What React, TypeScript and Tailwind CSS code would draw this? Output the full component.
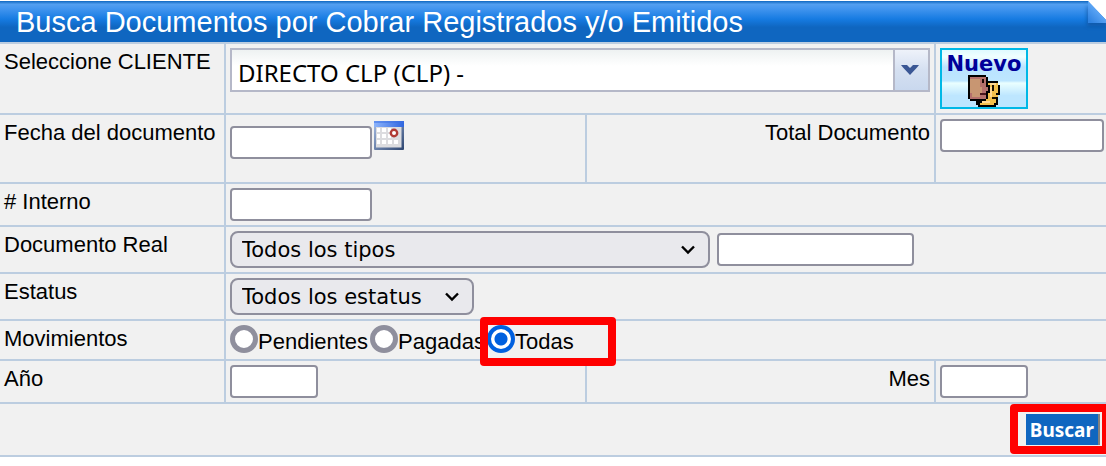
import React, { useState } from "react";

const label = "px-1 pt-1 text-[22px] leading-7";
const line = "border-b-2 border-[#bccde0]";
const side = "border-r-2 border-[#bccde0]";
const row = `grid grid-cols-[226px_361px_minmax(0,1fr)_170px] ${line}`;
const box = "h-[33px] rounded border-2 border-[#8f8f9d] bg-white px-1 text-[20px]";
const drop =
  "h-[37px] w-full appearance-none rounded-lg border-2 border-[#8f8f9d] bg-[#e9e9ed] pl-2.5 pr-8 font-['DejaVu_Sans',sans-serif] text-[21px] leading-[32px]";

function Drop({ id, text, className, name }: { id: string; text: string; className: string; name?: string }) {
  return (
    <div className={`relative ${className}`}>
      <select id={id} aria-label={name} className={drop}>
        <option>{text}</option>
      </select>
      <svg className="pointer-events-none absolute right-3.5 top-3.5 h-2.5 w-4" viewBox="0 0 16 10" fill="none" stroke="#000" strokeWidth="2.4">
        <path d="M2 1.5 8 7.5 14 1.5" />
      </svg>
    </div>
  );
}

function Calendar() {
  return (
    <svg className="h-[29px] w-[30px]" viewBox="0 0 30 29">
      <defs>
        <linearGradient id="calTop" x1="0" x2="1">
          <stop offset="0" stopColor="#8db4fb" />
          <stop offset="1" stopColor="#2f66e0" />
        </linearGradient>
        <linearGradient id="calEdge" x1="0" x2="1" y1="0" y2="1">
          <stop offset="0" stopColor="#a9bfe6" />
          <stop offset="1" stopColor="#2d456f" />
        </linearGradient>
      </defs>
      <rect width="30" height="29" rx="1" fill="url(#calEdge)" />
      <rect x="2" y="6" width="25.5" height="20.5" fill="#dcdcdf" />
      <path d="M3 7h3v4H3zM8 7h4v4H8zM14 7h3v4h-3zM3 13h3v4H3zM8 13h4v4H8zM14 13h3v4h-3zM3 19h3v4H3zM8 19h4v4H8zM14 19h4v4h-4zM20 19h4v4h-4z" fill="#fff" />
      <rect width="30" height="6" fill="url(#calTop)" />
      <rect width="30" height="2" fill="#3b6fe4" opacity=".5" />
      <circle cx="20" cy="12" r="3.2" fill="#fff" stroke="#b03a34" strokeWidth="2.4" />
    </svg>
  );
}

function People() {
  return (
    <svg className="h-8 w-8" viewBox="0 0 16 16" shapeRendering="crispEdges">
      <path d="M9 3h6v2h1v5h-1v5h-1v1H5v-1H4v-2h5z" fill="#000" />
      <path d="M10 4h5v5h-1v1h1v1h-1v3h-1v1H6v-1h3v-2h1z" fill="#f3c04c" />
      <path d="M11 4h3v1h-3zM11 6h1v5h-1zM7 13h4v1H7z" fill="#ffd994" />
      <path d="M12 5h1v3h-1zM12 11h2v1h-2z" fill="#1a1000" />
      <path d="M0 0h9v1h1v4h1v4h-1v3H9v1H1v-1H0z" fill="#000" />
      <path d="M1 1h8v5h1v2H9v4H1z" fill="#b5706c" />
      <path d="M1 2h5v4h1v3H6v2H2V9H1z" fill="#c89672" />
      <path d="M7 2h1v2H7z" fill="#1c0606" />
      <path d="M6 9h3v1H6z" fill="#4a161c" />
    </svg>
  );
}

function Fold() {
  return (
    <svg className="absolute right-0 top-0 h-8 w-6" viewBox="0 0 24 32">
      <defs>
        <linearGradient id="fold" x1="1" x2="0.2" y1="0" y2="1">
          <stop offset="0.4" stopColor="#64abf8" />
          <stop offset="1" stopColor="#2f83e2" />
        </linearGradient>
        <filter id="soft" x="-50%" y="-50%" width="200%" height="200%">
          <feGaussianBlur stdDeviation="2" />
        </filter>
      </defs>
      <path d="M5 4v21h20V20z" fill="#0a4890" opacity=".6" filter="url(#soft)" />
      <path d="M6 0h18v19z" fill="#fff" />
      <path d="M6 0v22h18v-3z" fill="url(#fold)" />
    </svg>
  );
}

export default function App() {
  const [move, setMove] = useState("Todas");
  return (
    <form className="w-full overflow-hidden bg-[#f1f1f1] font-['Liberation_Sans',Arial,sans-serif] text-black" onSubmit={(e) => e.preventDefault()}>
      <header className={`relative border-t border-t-white ${line}`}>
        <h1 className="bg-[linear-gradient(#0e67c0_0%,#539ff0_8%,#4094ee_20%,#167be2_44%,#0f66c0_64%)] px-4 pb-1 pt-1.5 text-[29px] leading-[31px] text-white">
          Busca Documentos por Cobrar Registrados y/o Emitidos
        </h1>
        <Fold />
      </header>

      <div className={`grid grid-cols-[226px_minmax(0,1fr)_170px] ${line}`}>
        <label htmlFor="cliente" className={`${label} ${side}`}>Seleccione CLIENTE</label>
        <div className={`p-1 ${side}`}>
          <div className="flex h-11 border-2 border-[#b5b8c8] bg-white">
            <input id="cliente" defaultValue="DIRECTO CLP (CLP) -" className="min-w-0 flex-1 bg-linear-to-b from-[#eef2f2] to-white to-40% px-1.5 pt-1.5 font-['Noto_Sans',sans-serif] text-[24px]" />
            <button type="button" aria-label="Abrir lista" className="flex w-[35px] items-center justify-center border-l-2 border-[#b5b8c8] bg-linear-to-b from-[#eef2fa] via-[#d5e0f1] to-[#c9d8ee] pr-1">
              <svg className="h-3 w-5" viewBox="0 0 20 12"><path d="M1 1h6l3 3 3-3h6l-2 2.500-7 7.500-7-7.500z" fill="#3a5795" /></svg>
            </button>
          </div>
        </div>
        <div className="p-1">
          <button type="button" className="flex h-[61px] w-[88px] flex-col items-center border-2 border-[#00b8e6] bg-[linear-gradient(#dffaff_0%,#f0ffff_12%,#b9e3ff_30%,#bde6ff_54%,#eaffff_58%,#bde6ff_80%,#bde6ff_100%)] font-['DejaVu_Sans',sans-serif] text-[21px] font-bold text-[#000099]">
            <span className="h-[25px] leading-7">Nuevo</span>
            <People />
          </button>
        </div>
      </div>

      <div className={row}>
        <label htmlFor="fecha" className={`${label} ${side}`}>Fecha del documento</label>
        <div className={`flex items-start gap-0.5 px-1 pb-[23px] pt-1.5 ${side}`}>
          <input id="fecha" className={`${box} mt-[5px] w-[142px]`} />
          <button type="button" aria-label="Elegir fecha"><Calendar /></button>
        </div>
        <label htmlFor="total" className={`${label} ${side} text-right`}>Total Documento</label>
        <div className="py-1 pl-1 pr-0.5"><input id="total" className={`${box} block w-full`} /></div>
      </div>

      <div className={`grid grid-cols-[226px_minmax(0,1fr)] ${line}`}>
        <label htmlFor="interno" className={`${label} ${side}`}># Interno</label>
        <div className="p-1"><input id="interno" className={`${box} block w-[142px]`} /></div>
      </div>

      <div className={`grid grid-cols-[226px_minmax(0,1fr)] ${line}`}>
        <label htmlFor="tipo" className={`${label} ${side}`}>Documento Real</label>
        <div className="flex items-center gap-[7px] p-1">
          <Drop id="tipo" text="Todos los tipos" className="w-[480px]" />
          <input aria-label="Número de documento" className={`${box} w-[197px]`} />
        </div>
      </div>

      <div className={`grid grid-cols-[226px_minmax(0,1fr)] ${line}`}>
        <label htmlFor="estatus" className={`${label} ${side}`}>Estatus</label>
        <div className="p-1"><Drop id="estatus" text="Todos los estatus" className="w-[244px]" /></div>
      </div>

      <fieldset className={`relative grid grid-cols-[226px_minmax(0,1fr)] ${line}`}>
        <div className={`${label} ${side}`}>Movimientos</div>
        <div className="flex h-[38px] gap-0.5 px-1 pt-1 text-[22px] leading-[33px]">
          {["Pendientes", "Pagadas", "Todas"].map((name) => (
            <label key={name} className="flex">
              <input
                type="radio"
                name="movimientos"
                checked={move === name}
                onChange={() => setMove(name)}
                className="size-7 appearance-none rounded-full border-[5px] border-[#8f8f9d] bg-white checked:border-4 checked:border-[#0060df] checked:bg-[radial-gradient(circle,#0060df_6px,#fff_7px)]"
              />
              {name}
            </label>
          ))}
        </div>
        <div className="pointer-events-none absolute -top-1 left-[480px] h-[49px] w-[136px] rounded border-8 border-[#ff0000]" />
      </fieldset>

      <div className={row}>
        <label htmlFor="anio" className={`${label} ${side}`}>Año</label>
        <div className={`p-1 ${side}`}><input id="anio" className={`${box} block w-[88px]`} /></div>
        <label htmlFor="mes" className={`${label} ${side} text-right`}>Mes</label>
        <div className="p-1"><input id="mes" className={`${box} block w-[88px]`} /></div>
      </div>

      <div className={`relative flex justify-end pb-2.5 pr-1.5 pt-2.5 ${line}`}>
        <button type="submit" className="h-[31px] border-r-2 border-[#808080] bg-[#0f66c0] px-1 pt-0.5 font-['Noto_Sans',sans-serif] text-[19px] font-bold leading-[29px] text-white">
          Buscar
        </button>
        <div className="pointer-events-none absolute -right-1 top-0 h-[50px] w-[100px] rounded border-8 border-[#ff0000]" />
      </div>
    </form>
  );
}
